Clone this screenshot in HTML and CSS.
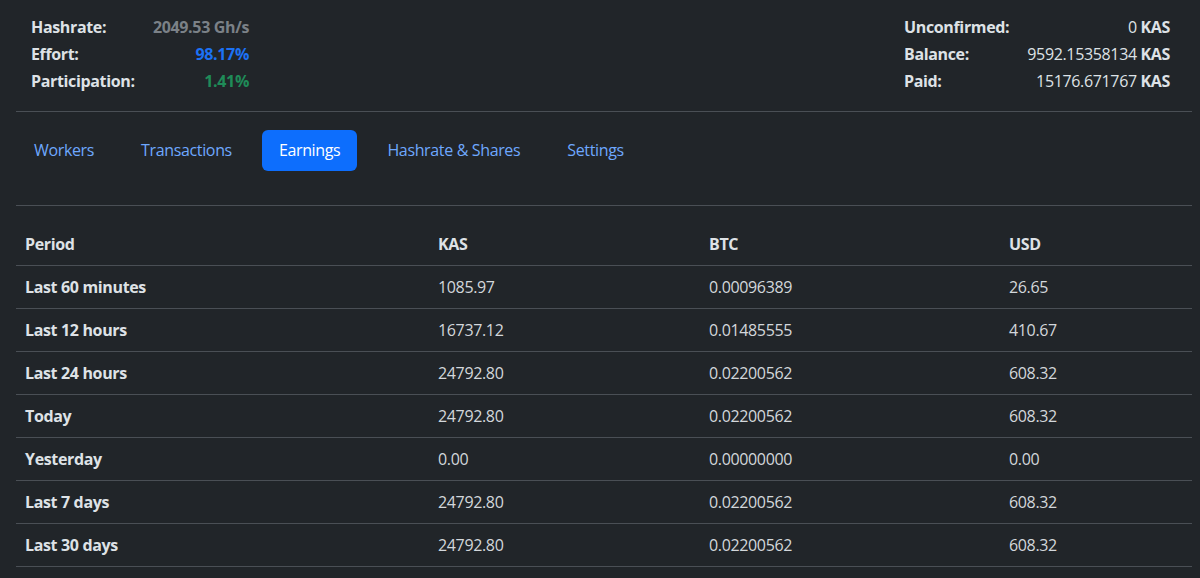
FILE: index.html
```html
<!DOCTYPE html>
<html lang="en">
<head>
<meta charset="utf-8">
<title>Earnings</title>
<link rel="stylesheet" href="styles.css">
</head>
<body>
<div class="page">
  <section class="stats">
    <dl class="stat-list stat-left">
      <dt>Hashrate:</dt><dd class="muted">2049.53 Gh/s</dd>
      <dt>Effort:</dt><dd class="blue">98.17%</dd>
      <dt>Participation:</dt><dd class="green">1.41%</dd>
    </dl>
    <dl class="stat-list stat-right">
      <dt>Unconfirmed:</dt><dd class="plain">0 <b>KAS</b></dd>
      <dt>Balance:</dt><dd class="plain">9592.15358134 <b>KAS</b></dd>
      <dt>Paid:</dt><dd class="plain">15176.671767 <b>KAS</b></dd>
    </dl>
  </section>

  <nav class="tabs">
    <a class="tab" href="#">Workers</a>
    <a class="tab" href="#">Transactions</a>
    <a class="tab active" href="#">Earnings</a>
    <a class="tab" href="#">Hashrate &amp; Shares</a>
    <a class="tab" href="#">Settings</a>
  </nav>

  <table class="earnings">
    <colgroup>
      <col class="c-period"><col class="c-kas"><col class="c-btc"><col class="c-usd">
    </colgroup>
    <thead>
      <tr><th>Period</th><th>KAS</th><th>BTC</th><th>USD</th></tr>
    </thead>
    <tbody>
      <tr><th>Last 60 minutes</th><td>1085.97</td><td>0.00096389</td><td>26.65</td></tr>
      <tr><th>Last 12 hours</th><td>16737.12</td><td>0.01485555</td><td>410.67</td></tr>
      <tr><th>Last 24 hours</th><td>24792.80</td><td>0.02200562</td><td>608.32</td></tr>
      <tr><th>Today</th><td>24792.80</td><td>0.02200562</td><td>608.32</td></tr>
      <tr><th>Yesterday</th><td>0.00</td><td>0.00000000</td><td>0.00</td></tr>
      <tr><th>Last 7 days</th><td>24792.80</td><td>0.02200562</td><td>608.32</td></tr>
      <tr><th>Last 30 days</th><td>24792.80</td><td>0.02200562</td><td>608.32</td></tr>
    </tbody>
  </table>
</div>
</body>
</html>
```

FILE: styles.css
```css
* { box-sizing: border-box; }

html, body {
  margin: 0;
  background: #212529;
  color: #dee2e6;
  font-family: "Open Sans", "Noto Sans", sans-serif;
  font-size: 16px;
  letter-spacing: -0.35px;
}

.page {
  padding: 0 8px 0 16px;
}

.stats {
  display: flex;
  justify-content: space-between;
  padding: 14px 22px 16px 15px;
  border-bottom: 1px solid #4a4f55;
}

.stat-list {
  display: grid;
  grid-template-columns: 1fr auto;
  margin: 0;
  line-height: 27px;
}

.stat-left { width: 218px; }
.stat-right { width: 266px; }

.stat-list dt {
  font-weight: 700;
  color: #dee2e6;
}

.stat-list dd {
  margin: 0;
  text-align: right;
  font-weight: 700;
}

.stat-list dd.plain { font-weight: 400; }
.stat-list dd.plain b { font-weight: 700; }

.muted { color: #7b8187; }
.blue { color: #1c72f5; }
.green { color: #1f8b58; }

.tabs {
  display: flex;
  gap: 13px;
  padding: 18px 0 34px 1px;
  border-bottom: 1px solid #4a4f55;
}

.tab {
  display: block;
  padding: 0 17px;
  line-height: 41px;
  border-radius: 6px;
  color: #6ea8fe;
  text-decoration: none;
}

.tab.active {
  background: #0d6efd;
  color: #ffffff;
}

.earnings {
  width: 100%;
  margin-top: 17px;
  border-collapse: collapse;
  table-layout: fixed;
}

.c-period { width: 413px; }
.c-kas { width: 271px; }
.c-btc { width: 300px; }
.c-usd { width: auto; }

.earnings th,
.earnings td {
  padding: 8px 9px;
  line-height: 26px;
  text-align: left;
  border-bottom: 1px solid #4a4f55;
  color: #dee2e6;
}

.earnings th { font-weight: 700; }
.earnings td { font-weight: 400; color: #d3d7db; }
```
